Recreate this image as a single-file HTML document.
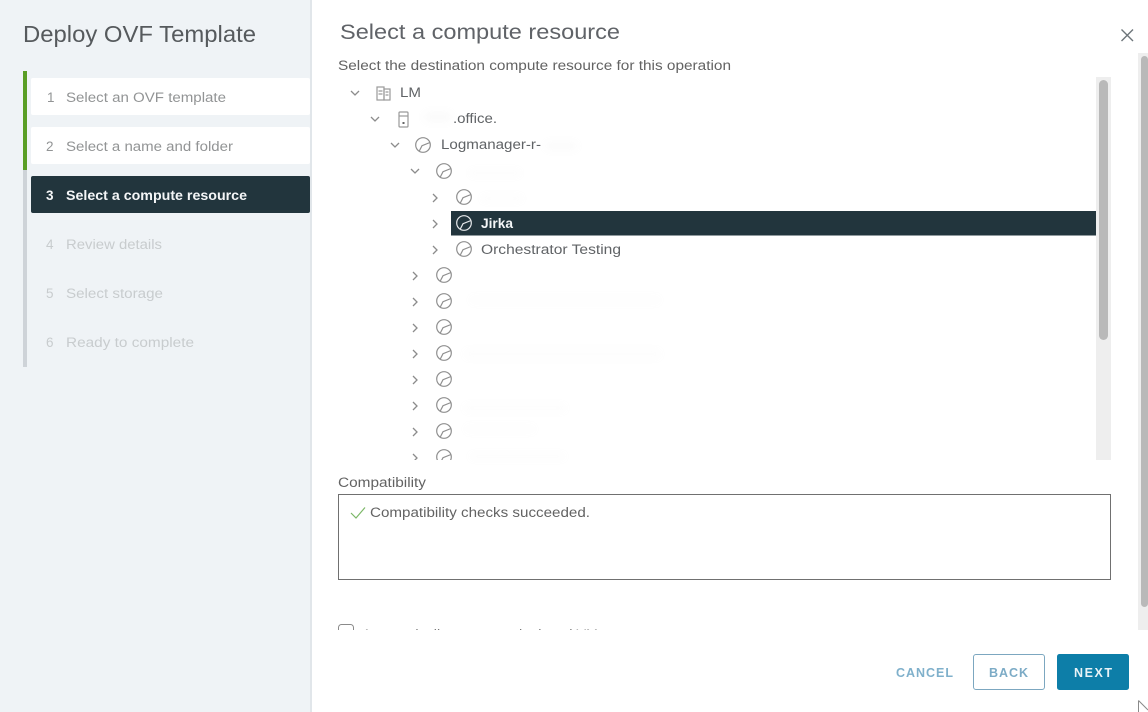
<!DOCTYPE html>
<html><head><meta charset="utf-8"><title>Deploy OVF Template</title>
<style>
html,body{margin:0;padding:0;background:#fff;width:1148px;height:712px;overflow:hidden}
svg{display:block;position:absolute;left:0;top:0}
text{font-family:"Liberation Sans",sans-serif}
</style></head><body>
<svg width="1148" height="712" viewBox="0 0 1148 712" xmlns="http://www.w3.org/2000/svg">
<defs>
<filter id="s" x="-5%" y="-5%" width="110%" height="110%"><feGaussianBlur stdDeviation="0.35"/></filter>
<filter id="b" x="-30%" y="-200%" width="160%" height="500%"><feGaussianBlur stdDeviation="4"/></filter>
<clipPath id="tree"><rect x="330" y="77" width="770" height="383"/></clipPath>
<clipPath id="bot"><rect x="330" y="600" width="780" height="30"/></clipPath>
<g id="clk" fill="none" stroke-width="1.2"><circle cx="0" cy="0" r="7.300"/><path d="M-3.700 6L-1 .7L7-2.500"/></g>
<path id="cd" d="M-4-2L0 2L4-2" fill="none" stroke="#8c8c8c" stroke-width="1.300"/>
<path id="cr" d="M-2-4L2 0L-2 4" fill="none" stroke="#8c8c8c" stroke-width="1.300"/>
</defs>
<rect width="1148" height="712" fill="#fff"/>
<g filter="url(#s)">
<rect width="311" height="712" fill="#eff3f6"/>
<rect x="310" width="2" height="712" fill="#e1e6ea"/>
<rect x="23" y="71" width="4" height="296" fill="#ced3d8"/>
<rect x="23" y="71" width="4" height="99" fill="#5a9e25"/>
<rect x="31" y="78" width="279" height="37" rx="2" fill="#fff"/>
<rect x="31" y="127" width="279" height="37" rx="2" fill="#fff"/>
<rect x="31" y="176" width="279" height="37" rx="2" fill="#23343e"/>
<text x="23" y="42" font-size="23" fill="#565a5d" textLength="233" lengthAdjust="spacingAndGlyphs">Deploy OVF Template</text>
<g font-size="13.500" fill="#929495">
<text x="47" y="102">1</text><text x="66" y="102" textLength="160" lengthAdjust="spacingAndGlyphs">Select an OVF template</text>
<text x="46" y="151">2</text><text x="66" y="151" textLength="167" lengthAdjust="spacingAndGlyphs">Select a name and folder</text>
</g>
<g font-size="13.500" fill="#f4f6f7" font-weight="bold">
<text x="46" y="200">3</text><text x="66" y="200" textLength="181" lengthAdjust="spacingAndGlyphs">Select a compute resource</text>
</g>
<g font-size="13.500" fill="#c8ccce">
<text x="46" y="249">4</text><text x="66" y="249" textLength="96" lengthAdjust="spacingAndGlyphs">Review details</text>
<text x="46" y="298">5</text><text x="66" y="298" textLength="97" lengthAdjust="spacingAndGlyphs">Select storage</text>
<text x="46" y="347">6</text><text x="66" y="347" textLength="128" lengthAdjust="spacingAndGlyphs">Ready to complete</text>
</g>
<text x="340" y="39" font-size="21.500" fill="#606468" textLength="280" lengthAdjust="spacingAndGlyphs">Select a compute resource</text>
<text x="338" y="70" font-size="13.500" fill="#636363" textLength="393" lengthAdjust="spacingAndGlyphs">Select the destination compute resource for this operation</text>
<path d="M1121.500 29.500L1133 41M1133 29.500L1121.500 41" stroke="#6d757a" stroke-width="1.400" fill="none"/>

<g clip-path="url(#tree)">
<rect x="451" y="211" width="645" height="24.500" fill="#23343e"/>
<use href="#cd" x="355" y="93"/><use href="#cd" x="375" y="119"/><use href="#cd" x="395" y="145"/><use href="#cd" x="415" y="171"/>
<use href="#cr" x="435" y="198"/><use href="#cr" x="435" y="224"/><use href="#cr" x="435" y="250"/>
<use href="#cr" x="415" y="276"/><use href="#cr" x="415" y="302"/><use href="#cr" x="415" y="328"/><use href="#cr" x="415" y="354"/>
<use href="#cr" x="415" y="380"/><use href="#cr" x="415" y="406"/><use href="#cr" x="415" y="432"/><use href="#cr" x="415" y="458"/>
<g fill="none" stroke="#9a9a9a" stroke-width="1.200">
<rect x="377" y="87" width="7" height="13"/><rect x="384" y="89" width="6" height="11"/>
<path d="M378.500 91h4M378.500 94h4M385.500 92h3M385.500 95h3"/>
<rect x="399" y="112" width="9" height="15" rx="1"/><path d="M399 116h9"/>
</g>
<rect x="402.500" y="122" width="2" height="2" fill="#666"/>
<g stroke="#8f8f8f">
<use href="#clk" x="423" y="145"/><use href="#clk" x="444" y="171"/><use href="#clk" x="464" y="197"/>
<use href="#clk" x="464" y="249"/>
<use href="#clk" x="444" y="275"/><use href="#clk" x="444" y="301"/><use href="#clk" x="444" y="327"/><use href="#clk" x="444" y="353"/>
<use href="#clk" x="444" y="379"/><use href="#clk" x="444" y="405"/><use href="#clk" x="444" y="431"/><use href="#clk" x="444" y="457"/>
</g>
<use href="#clk" x="464" y="223" stroke="#e6e9eb"/>
<g font-size="13.500" fill="#606366">
<text x="400" y="97" textLength="21" lengthAdjust="spacingAndGlyphs">LM</text>
<text x="453" y="123" textLength="44" lengthAdjust="spacingAndGlyphs">.office.</text>
<text x="441" y="149" textLength="100" lengthAdjust="spacingAndGlyphs">Logmanager-r-</text>
<text x="481" y="254" textLength="140" lengthAdjust="spacingAndGlyphs">Orchestrator Testing</text>
</g>
<text x="481" y="228" font-size="13.500" font-weight="bold" fill="#f4f6f7" textLength="32" lengthAdjust="spacingAndGlyphs">Jirka</text>
</g>
<rect x="1096" y="77" width="15" height="383" fill="#eeeeee"/>
<rect x="1099" y="80" width="9" height="260" rx="4.500" fill="#b9b9b9"/>
<rect x="1138" y="53" width="10" height="577" fill="#eeeeee"/>
<rect x="1141" y="56" width="7" height="551" rx="3.500" fill="#b9b9b9"/>

<text x="338" y="487" font-size="13.500" fill="#636363" textLength="88" lengthAdjust="spacingAndGlyphs">Compatibility</text>
<rect x="338.500" y="494.500" width="772" height="85" fill="#fff" stroke="#707070" stroke-width="1"/>
<path d="M351 513L356 518L365 507.500" fill="none" stroke="#7cb868" stroke-width="1.200"/>
<text x="370" y="517" font-size="13.500" fill="#636363" textLength="220" lengthAdjust="spacingAndGlyphs">Compatibility checks succeeded.</text>
<g clip-path="url(#bot)">
<rect x="338.500" y="624.500" width="15" height="15" rx="3" fill="#fff" stroke="#8a8a8a"/>
<text x="362" y="639" font-size="13.500" fill="#777" textLength="236" lengthAdjust="spacingAndGlyphs">Automatically power on deployed VM</text>
</g>
<text x="896" y="677" font-size="12.500" font-weight="bold" fill="#7fb0cb" textLength="57" lengthAdjust="spacing">CANCEL</text>
<rect x="973.500" y="654.500" width="71" height="35" rx="2.500" fill="#fff" stroke="#7ba7c0"/>
<text x="989" y="677" font-size="12.500" font-weight="bold" fill="#7cabc6" textLength="39" lengthAdjust="spacing">BACK</text>
<rect x="1057" y="654" width="72" height="36" rx="2.500" fill="#0b7ea8"/>
<text x="1074" y="677" font-size="12.500" font-weight="bold" fill="#e8f2f6" textLength="38" lengthAdjust="spacing">NEXT</text>
<path d="M1138.500 700.500V712M1138.500 700.500L1148 710" fill="none" stroke="#8a8a8a" stroke-width="1"/>
</g>
<g fill="#c9c9c9" opacity=".1" filter="url(#b)">
<rect x="425" y="113" width="26" height="8"/>
<rect x="546" y="143" width="30" height="6"/>
<rect x="470" y="170" width="50" height="6" opacity=".5"/>
<rect x="482" y="196" width="40" height="5" opacity=".6"/>
<rect x="470" y="296" width="190" height="8" opacity=".3"/>
<rect x="465" y="350" width="195" height="8" opacity=".45"/>
<rect x="465" y="405" width="100" height="6" opacity=".6"/>
<rect x="465" y="425" width="70" height="8" opacity=".3"/>
<rect x="470" y="454" width="95" height="5" opacity=".5"/>
</g>
</svg>
</body></html>
